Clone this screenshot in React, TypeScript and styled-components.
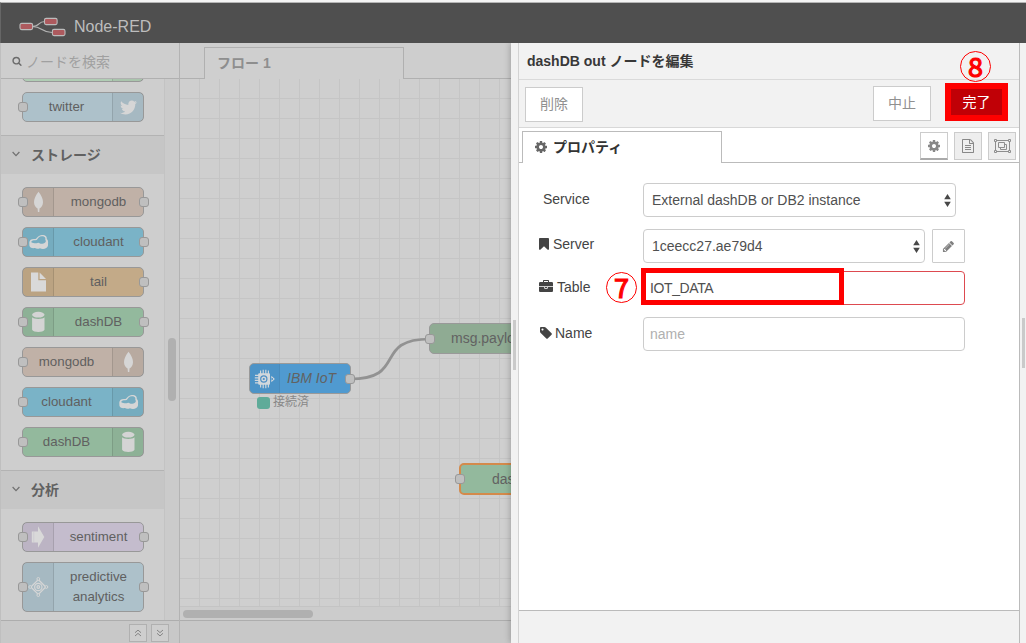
import React from "react";
import styled, { createGlobalStyle } from "styled-components";
import { FaTwitter } from "react-icons/fa";

const GlobalStyle = createGlobalStyle`
  * { box-sizing: border-box; }
  body {
    margin: 0;
    overflow: hidden;
    background: #cfcfcf;
    font-family: "Liberation Sans", "Noto Sans CJK JP", sans-serif;
    font-size: 14px;
    color: #444;
  }
`;

/* ---------- icons ---------- */

const GLYPHS = {
  cog: {
    w: 1792,
    d: "M1152 896q0-106-75-181t-181-75-181 75-75 181 75 181 181 75 181-75 75-181zm512-109v222q0 12-8 23t-20 13l-185 28q-19 54-39 91 35 50 107 138 10 12 10 25t-9 23q-27 37-99 108t-94 71q-12 0-26-9l-138-108q-44 23-91 38-16 136-29 186-7 28-36 28h-222q-14 0-24.5-8.5t-11.5-21.5l-28-184q-49-16-90-37l-141 107q-10 9-25 9-14 0-25-11-126-114-165-168-7-10-7-23 0-12 8-23 15-21 51-66.5t54-70.5q-27-50-41-99l-183-27q-13-2-21-12.5t-8-23.5v-222q0-12 8-23t19-13l186-28q14-46 39-92-40-57-107-138-10-12-10-24 0-10 9-23 26-36 98.5-107.5t94.5-71.5q13 0 26 10l138 107q44-23 91-38 16-136 29-186 7-28 36-28h222q14 0 24.5 8.5t11.5 21.5l28 184q49 16 90 37l142-107q9-9 24-9 13 0 25 10 129 119 165 170 7 8 7 22 0 12-8 23-15 21-51 66.5t-54 70.5q26 50 41 98l183 28q13 2 21 12.5t8 23.5z",
  },
  file: {
    w: 1536,
    d: "M1468 380q28 28 48 76t20 88v1152q0 40-28 68t-68 28h-1344q-40 0-68-28t-28-68v-1600q0-40 28-68t68-28h896q40 0 88 20t76 48zm-444-244v376h376q-10-29-22-41l-313-313q-12-12-41-22zm384 1528v-1024h-416q-40 0-68-28t-28-68v-416h-768v1536h1280zm-1024-864q0-14 9-23t23-9h704q14 0 23 9t9 23v64q0 14-9 23t-23 9h-704q-14 0-23-9t-9-23v-64zm736 224q14 0 23 9t9 23v64q0 14-9 23t-23 9h-704q-14 0-23-9t-9-23v-64q0-14 9-23t23-9h704zm0 256q14 0 23 9t9 23v64q0 14-9 23t-23 9h-704q-14 0-23-9t-9-23v-64q0-14 9-23t23-9h704z",
  },
  briefcase: {
    w: 1792,
    d: "M640 256h512v-128h-512v128zm1152 640v480q0 66-47 113t-113 47h-1472q-66 0-113-47t-47-113v-480h672v160q0 26 19 45t45 19h320q26 0 45-19t19-45v-160h672zm-768 0v128h-256v-128h256zm768-480v384h-1792v-384q0-66 47-113t113-47h352v-160q0-40 28-68t68-28h576q40 0 68 28t28 68v160h352q66 0 113 47t47 113z",
  },
  tag: {
    w: 1664,
    d: "M576 448q0-53-37.5-90.5t-90.5-37.5-90.5 37.5-37.5 90.5 37.5 90.5 90.5 37.5 90.5-37.5 37.5-90.5zm1067 576q0 53-37 90l-491 492q-39 37-91 37-53 0-90-37l-715-716q-38-37-64.5-101t-26.5-117v-416q0-52 38-90t90-38h416q53 0 117 26.5t102 64.5l715 714q37 39 37 91z",
  },
  bookmark: {
    w: 1280,
    d: "M1164 128q23 0 44 9 33 13 52.5 41t19.5 62v1289q0 34-19.5 62t-52.5 41q-19 8-44 8-48 0-83-32l-441-424-441 424q-36 33-83 33-23 0-44-9-33-13-52.5-41t-19.5-62v-1289q0-34 19.5-62t52.5-41q21-9 44-9h1048z",
  },
  pencil: {
    w: 1792,
    d: "M491 1536l91-91-235-235-91 91v107h128v128h107zm523-928q0-22-22-22-10 0-17 7l-542 542q-7 7-7 17 0 22 22 22 10 0 17-7l542-542q7-7 7-17zm-54-192l416 416-832 832h-416v-416zm683 96q0 53-37 90l-166 166-416-416 166-165q36-38 90-38 53 0 91 38l235 234q37 39 37 91z",
  },
  search: {
    w: 1792,
    d: "M1216 832q0-185-131.5-316.5t-316.5-131.5-316.5 131.5-131.5 316.5 131.5 316.5 316.5 131.5 316.5-131.5 131.5-316.5zm512 832q0 52-38 90t-90 38q-54 0-90-38l-343-342q-179 124-399 124-143 0-273.5-55.5t-225-150-150-225-55.5-273.5 55.5-273.5 150-225 225-150 273.5-55.5 273.5 55.5 225 150 150 225 55.5 273.5q0 220-124 399l343 343q37 37 37 90z",
  },
};

const Glyph = ({ name, size = 14 }: { name: keyof typeof GLYPHS; size?: number }) => (
  <svg
    width={(GLYPHS[name].w / 1792) * size}
    height={size}
    viewBox={`0 0 ${GLYPHS[name].w} 1792`}
    fill="currentColor"
  >
    <path d={GLYPHS[name].d} />
  </svg>
);

const LogoMark = () => (
  <svg width="48" height="20" viewBox="0 0 48 20">
    <g fill="none" stroke="#b4b4b4" strokeWidth="1.2">
      <path d="M13 9.5C22 9.5 18 4.5 26 4.5" />
      <path d="M13 9.5C24 9.5 22 15.5 33 15.5" />
    </g>
    <g fill="#ad5a5e" stroke="#bcbcbc" strokeWidth="1.1">
      <rect x="1" y="6.4" width="12.6" height="6.2" rx="1.6" />
      <rect x="25.5" y="1.4" width="12.6" height="6.2" rx="1.6" />
      <rect x="33.4" y="12.4" width="12.6" height="6.2" rx="1.6" />
    </g>
  </svg>
);

const Leaf = () => (
  <svg width="22" height="22" viewBox="0 0 22 22" fill="#d6d6d6">
    <path d="M11.500 .8C8.500 4.800 7 8 7 11.200c0 3 1.600 5 3.600 6.400L10.900 21h1.400l.2-3.400c2-1.400 3.500-3.400 3.500-6.400C16 8 14.500 4.800 11.500 .8z" />
  </svg>
);

const Cloud = () => (
  <svg width="22" height="20" viewBox="0 0 22 20">
    <path
      d="M2.300 10.500C2.500 7.500 5 6.500 8.500 7C10 6.500 11 3.200 15 3C19 3 20 5 19.800 7C21.300 8 21.200 10 21 12V13.500C20.500 16.500 16 18 13 16.200C11 17 9 16.800 8 16C5 16.500 2.500 15.500 2.400 13.500z"
      fill="#d6d6d6"
    />
    <path
      d="M4.200 9.800C5.200 8.100 8 8.400 9.800 8.100C11 6.500 12 4.200 15 4.300C18 4.300 18.700 6 18.300 7.800C19.800 9.500 18 11.600 15.500 11.800C13.500 12 12.500 10.900 11.300 10.700C9.500 11.300 8.800 11.400 7.500 11.200C6 11.100 4.500 10.800 4.200 9.800z"
      fill="#76acc0"
    />
  </svg>
);

const FileSolid = () => (
  <svg width="22" height="22" viewBox="0 0 22 22" fill="#d9d9d9">
    <path d="M4 1.500h7.300v7.700H19V20.500H4z" />
    <path d="M12.600 1.500L19 7.900h-6.400z" />
  </svg>
);

const Cylinder = () => (
  <svg width="22" height="24" viewBox="0 0 22 24" fill="#d4d4d4">
    <ellipse cx="11.300" cy="4.700" rx="6.200" ry="2.900" />
    <path d="M5.100 7.300c1.500 2.100 10.900 2.100 12.400 0v12.400c-1.500 3-10.900 3-12.400 0z" />
  </svg>
);

const Arrow = () => (
  <svg width="22" height="24" viewBox="0 0 22 24" fill="#d9d9d9">
    <path d="M4.800 6.500H11V1.200L17.300 12l-6.300 10.800v-5.300H4.800z" />
    <path d="M6.800 6.500v11" stroke="#c9c4ce" strokeWidth=".7" />
  </svg>
);

const Predict = () => (
  <svg width="22" height="22" viewBox="0 0 22 22" fill="none" stroke="#d6d6d6" strokeWidth="1.200">
    <path d="M11.300 3.500L18.800 11l-7.500 7.500L3.800 11z" />
    <circle cx="11.300" cy="11" r="3.700" />
    <circle cx="11.300" cy="11" r="1.300" />
    <g fill="#a6bac2" strokeWidth="1">
      <circle cx="11.300" cy="2.900" r="1.400" />
      <circle cx="19.400" cy="11" r="1.400" />
      <circle cx="11.300" cy="19.100" r="1.400" />
      <circle cx="3.200" cy="11" r="1.400" />
    </g>
  </svg>
);

const Chip = () => (
  <svg width="22" height="20" viewBox="0 0 22 20">
    <g stroke="#cfd6db" strokeWidth="1.200">
      <path d="M6.600 1.500v17M9.200 .8v18.400M11.800 .8v18.400M14.400 1.500v17M1 6.300h14M.8 8.800h14M.8 11.300h14M1 13.800h14" />
    </g>
    <rect x="4.200" y="4.200" width="11.800" height="11.600" rx="1" fill="#d3d8dc" />
    <circle cx="9.800" cy="10" r="3.100" fill="none" stroke="#4e8fc4" strokeWidth="1.200" />
    <circle cx="9.800" cy="10" r="1.100" fill="#4e8fc4" />
    <path d="M17.300 6.700l3.600 3.300-3.600 3.300z" fill="#d3d8dc" />
    <circle cx="18.200" cy="10" r=".9" fill="#4e8fc4" />
  </svg>
);

const GroupIcon = () => (
  <svg width="17" height="14" viewBox="0 0 17 14" fill="none" stroke="#8e8e8e">
    <path d="M1.500 1.500h14v11h-14z" />
    <path d="M.5 .5h2v2h-2zM14.500 .5h2v2h-2zM.5 11.500h2v2h-2zM14.500 11.500h2v2h-2z" fill="#eee" />
    <path d="M4.500 3.500h6v5h-6zM10.500 5.500h2v5h-6v-2" />
  </svg>
);

const Chevron = () => (
  <svg width="8" height="6" viewBox="0 0 8 6" fill="none" stroke="#707070" strokeWidth="1.200">
    <path d="M.6 1L4 4.600 7.400 1" />
  </svg>
);

const DoubleChevron = ({ down = false }: { down?: boolean }) => (
  <svg width="8" height="8" viewBox="0 0 8 8" fill="none" stroke="#858585" strokeWidth="1">
    <path d={down ? "M1 1l3 2.600L7 1M1 4.300l3 2.600 3-2.600" : "M1 3.700l3-2.600 3 2.600M1 7l3-2.600L7 7"} />
  </svg>
);

const Updown = () => (
  <svg width="7" height="13" viewBox="0 0 7 13" fill="#484848">
    <path d="M3.500 0L6.800 5.300H.2zM3.500 13L.2 7.700h6.600z" />
  </svg>
);

/* ---------- frame ---------- */

const Page = styled.div`
  display: flex;
  flex-direction: column;
  width: 1026px;
  height: 643px;
  border-top: 2px solid #f4f4f4;
`;

const Header = styled.header`
  flex: 0 0 41px;
  display: flex;
  align-items: center;
  gap: 7px;
  padding: 7px 0 0 18px;
  background: #4f4f4f;
  border-top: 1px solid #b5b5b5;
  border-left: 1px solid #666;
  color: #bdbdbd;
  font-size: 16px;
`;

const Body = styled.main`
  flex: 1;
  display: flex;
  min-height: 0;
`;

/* ---------- palette ---------- */

const Palette = styled.aside`
  flex: 0 0 180px;
  display: flex;
  flex-direction: column;
  border-left: 1px solid #bfbfbf;
  border-right: 1px solid #b3b3b3;
  background: #cecece;
`;

const Search = styled.div`
  flex: 0 0 36px;
  display: flex;
  align-items: center;
  gap: 4px;
  padding: 1px 0 0 11px;
  border-bottom: 1px solid #b0b0b0;
  color: #a0a0a0;
  svg { color: #6c6c6c; }
`;

const PaletteScroll = styled.div`
  flex: 1;
  display: flex;
  min-height: 0;
  overflow: hidden;
`;

const PaletteList = styled.div`
  flex: 0 0 164px;
  border-right: 1px solid #c3c3c3;
`;

const ScrollLane = styled.div`
  flex: 1;
  padding: 259px 0 0 3px;
  background: #cbcbcb;
`;

const ScrollThumb = styled.div`
  width: 8px;
  height: 63px;
  border-radius: 4px;
  background: #b0b0b0;
`;

const NodeGroup = styled.div<{ $clipped?: boolean }>`
  display: flex;
  flex-direction: column;
  gap: 10px;
  padding: 13px 20px 13px 21px;
  margin-top: ${(p) => (p.$clipped ? "-40px" : "0")};
`;

const CategoryHeader = styled.div`
  height: 39px;
  display: flex;
  align-items: center;
  gap: 11px;
  padding: 0 0 2px 11px;
  border-top: 1px solid #b3b3b3;
  background: #c6c6c6;
  color: #616161;
  font-weight: bold;
`;

const NodeBox = styled.div<{ $color: string; $tall?: boolean; $flip?: boolean }>`
  position: relative;
  flex: none;
  display: flex;
  flex-direction: ${(p) => (p.$flip ? "row-reverse" : "row")};
  height: ${(p) => (p.$tall ? 50 : 30)}px;
  width: 122px;
  border: 1px solid #989898;
  border-radius: 5px;
  background: ${(p) => p.$color};
`;

const NodeIcon = styled.div<{ $flip?: boolean }>`
  flex: 0 0 31px;
  display: flex;
  align-items: center;
  justify-content: center;
  background: rgba(0, 0, 0, 0.04);
  border: 0 solid rgba(0, 0, 0, 0.11);
  border-width: ${(p) => (p.$flip ? "0 0 0 1px" : "0 1px 0 0")};
`;

const NodeLabel = styled.div<{ $flip?: boolean }>`
  flex: 1;
  display: flex;
  align-items: center;
  justify-content: center;
  padding-right: ${(p) => (p.$flip ? 2 : 0)}px;
  text-align: center;
  white-space: pre-line;
  font-size: 13.3px;
  line-height: 20px;
  color: #606060;
`;

const Port = styled.i<{ $side: "left" | "right"; $out?: number }>`
  position: absolute;
  ${(p) => p.$side}: -${(p) => p.$out ?? 5}px;
  top: calc(50% - 5px);
  width: 10px;
  height: 10px;
  border: 1px solid #989898;
  border-radius: 3px;
  background: #bfbfbf;
`;

const PaletteFooter = styled.div`
  flex: 0 0 23px;
  display: flex;
  justify-content: flex-end;
  gap: 4px;
  padding: 3px 10px 0 0;
  border-top: 1px solid #adadad;
  background: #c8c8c8;
`;

const MiniButton = styled.span`
  width: 18px;
  height: 18px;
  display: flex;
  align-items: center;
  justify-content: center;
  border: 1px solid #b0b0b0;
  background: #cecece;
`;

/* ---------- workspace ---------- */

const Workspace = styled.section`
  flex: 0 0 331px;
  display: flex;
  flex-direction: column;
  min-width: 0;
`;

const FlowTabs = styled.div`
  flex: 0 0 36px;
  display: flex;
  padding: 4px 0 0 24px;
  background: linear-gradient(#b0b0b0, #b0b0b0) bottom / 100% 1px no-repeat #cecece;
`;

const FlowTab = styled.div`
  width: 200px;
  padding: 5px 0 0 12px;
  border: 1px solid #b0b0b0;
  border-bottom: 0;
  background: #cfcfcf;
  color: #8e8e8e;
  font-weight: bold;
  line-height: 20px;
`;

const Canvas = styled.div`
  flex: 0 0 528px;
  position: relative;
  overflow: hidden;
  border-bottom: 1px solid #c4c4c4;
  background-color: #cfcfcf;
  background-image: linear-gradient(90deg, transparent 19px, #c5c5c5 19px),
    linear-gradient(transparent 19px, #c5c5c5 19px);
  background-size: 20px 20px;
`;

const Wires = styled.svg`
  position: absolute;
  inset: 0;
`;

const CanvasNode = styled.div<{ $x: number; $y: number; $w: number; $color: string; $selected?: boolean }>`
  position: absolute;
  left: ${(p) => p.$x}px;
  top: ${(p) => p.$y}px;
  width: ${(p) => p.$w}px;
  height: ${(p) => (p.$selected ? 32 : 31)}px;
  display: flex;
  align-items: center;
  border: ${(p) => (p.$selected ? "2px solid #d48a4b" : "1px solid #999")};
  border-radius: 5px;
  background: ${(p) => p.$color};
  color: #626262;
`;

const CanvasIcon = styled.div`
  align-self: stretch;
  width: 30px;
  display: flex;
  align-items: center;
  justify-content: center;
  border-right: 1px solid rgba(0, 0, 0, 0.06);
  background: rgba(0, 0, 0, 0.04);
  border-radius: 4px 0 0 4px;
`;

const CanvasLabel = styled.span<{ $indent: number; $italic?: boolean }>`
  padding-left: ${(p) => p.$indent}px;
  padding-bottom: 1px;
  white-space: nowrap;
  font-style: ${(p) => (p.$italic ? "italic" : "normal")};
`;

const Status = styled.div`
  position: absolute;
  left: 77px;
  top: 314px;
  display: flex;
  align-items: center;
  gap: 3px;
  height: 20px;
  font-size: 12px;
  line-height: 16px;
  color: #888;
`;

const StatusText = styled.span`
  padding-bottom: 3px;
`;

const StatusDot = styled.i`
  width: 13px;
  height: 12px;
  border-radius: 3px;
  background: #5fab99;
`;

const HScroll = styled.div`
  flex: 0 0 13px;
  padding: 3px 0 0 3px;
  background: #cccccc;
`;

const HThumb = styled.div`
  width: 130px;
  height: 8px;
  border-radius: 4px;
  background: #b0b0b0;
`;

const WorkspaceFooter = styled.div`
  flex: 1;
  border-top: 1px solid #adadad;
  background: #c8c8c8;
`;

/* ---------- edit tray ---------- */

const Tray = styled.section`
  position: relative;
  flex: 0 0 509px;
  display: flex;
  border-right: 1px solid #bbb;
  background: #f2f2f2;
  box-shadow: -1px 0 6px rgba(0, 0, 0, 0.22);
  clip-path: inset(0 0 0 -12px);
`;

const Grip = styled.div`
  flex: 0 0 8px;
  padding: 277px 0 0 2px;
  border-right: 1px solid #d3d3d3;
`;

const GripHandle = styled.div`
  width: 3px;
  height: 50px;
  background: #cacaca;
`;

const TrayMain = styled.div`
  flex: 1;
  display: flex;
  flex-direction: column;
`;

const TrayTitle = styled.h1`
  flex: 0 0 37px;
  margin: 0;
  padding-left: 8px;
  border-bottom: 1px solid #dadada;
  font-size: 14px;
  line-height: 36px;
  color: #383838;
`;

const Toolbar = styled.div`
  flex: 0 0 48px;
  display: flex;
  align-items: flex-start;
  padding: 6px 11px 0 6px;
  border-bottom: 1px solid #d8d8d8;
`;

const Button = styled.button<{ $drop?: number }>`
  width: 58px;
  height: 35px;
  margin-top: ${(p) => p.$drop || 0}px;
  padding: 0 0 3px;
  border: 1px solid #ccc;
  background: #fff;
  color: #909090;
  font: inherit;
`;

const Spacer = styled.div`
  flex: 1;
`;

const DoneFrame = styled.div`
  position: relative;
  width: 63px;
  height: 38px;
  margin: -3px 0 0 14px;
  border: 6px solid #fe0000;
  background: #c00006;
  color: #fff;
  line-height: 26px;
  text-align: center;
`;

const Step = styled.span<{ $x: number; $y: number }>`
  position: absolute;
  left: ${(p) => p.$x}px;
  top: ${(p) => p.$y}px;
  width: 31px;
  height: 31px;
  border: 1.5px solid #fe0000;
  border-radius: 50%;
  font: 27px/28px "Noto Sans CJK JP", sans-serif;
  -webkit-text-stroke: 1.2px #fe0000;
  text-align: center;
  color: #fe0000;
`;

const TabBar = styled.div`
  flex: 0 0 35px;
  display: flex;
  padding: 3px 3px 0;
  background: linear-gradient(#bbb, #bbb) bottom / 100% 1px no-repeat #fff;
`;

const PropertyTab = styled.div`
  width: 200px;
  display: flex;
  align-items: center;
  gap: 5px;
  padding: 0 0 4px 11px;
  border: 1px solid #bbb;
  border-bottom: 0;
  background: #fff;
  color: #333;
  font-weight: bold;
  svg { color: #666; margin-top: 3px; }
`;

const TabIcons = styled.div`
  display: flex;
  gap: 6px;
  padding-top: 1px;
`;

const TabIcon = styled.span<{ $active?: boolean }>`
  width: 28px;
  height: 28px;
  display: flex;
  align-items: center;
  justify-content: center;
  border: 1px solid #ccc;
  border-bottom: ${(p) => (p.$active ? "2px solid #aaa" : "1px solid #ccc")};
  background: ${(p) => (p.$active ? "#fff" : "#eee")};
  color: #888;
`;

const Form = styled.div`
  flex: 1;
  display: flex;
  flex-direction: column;
  padding: 20px 0 0 20px;
  background: #fff;
`;

const Row = styled.div<{ $gap?: number }>`
  position: relative;
  display: flex;
  height: 34px;
  margin-bottom: ${(p) => p.$gap ?? 12}px;
`;

const Label = styled.label<{ $indent?: number; $gap?: number; $height?: number }>`
  flex: 0 0 104px;
  height: ${(p) => p.$height ?? 32}px;
  display: flex;
  align-items: center;
  gap: ${(p) => p.$gap ?? 4}px;
  padding-left: ${(p) => p.$indent || 0}px;
  color: #444;
`;

const Field = styled.div<{ $w: number; $error?: boolean; $muted?: boolean; $pad?: number }>`
  width: ${(p) => p.$w}px;
  display: flex;
  align-items: center;
  justify-content: space-between;
  padding: 0 4px 0 ${(p) => p.$pad ?? 6}px;
  border: 1px solid ${(p) => (p.$error ? "#dd4a50" : "#ccc")};
  border-radius: 4px;
  color: ${(p) => (p.$muted ? "#b0b0b0" : "#505050")};
  letter-spacing: ${(p) => (p.$error ? "-0.4px" : "normal")};
`;

const EditButton = styled.span`
  width: 33px;
  margin-left: 7px;
  display: flex;
  align-items: center;
  justify-content: center;
  border: 1px solid #ccc;
  border-radius: 1px;
  color: #808080;
`;

const Highlight = styled.div`
  position: absolute;
  left: 102px;
  top: -3px;
  width: 203px;
  height: 37px;
  border: 5px solid #fe0000;
`;

const TrayFooter = styled.div`
  flex: 0 0 33px;
  border-top: 1px solid #bbb;
`;

const SideStrip = styled.div`
  flex: 1;
  padding: 275px 0 0 2px;
  background: #f2f2f2;
`;

/* ---------- data ---------- */

interface PaletteNode {
  label: string;
  color: string;
  icon: React.ReactNode;
  flip?: boolean;
  input?: boolean;
  output?: boolean;
  tall?: boolean;
}

const BROWN = "#c0b1a7";
const CYAN = "#7ab3c7";
const GREEN = "#93b99d";

const social: PaletteNode[] = [
  { label: "", color: "#b0cdb4", icon: null, flip: true },
  { label: "twitter", color: "#adc1ca", icon: <FaTwitter size={17} color="#d6d6d6" />, flip: true, input: true },
];

const storage: PaletteNode[] = [
  { label: "mongodb", color: BROWN, icon: <Leaf />, input: true, output: true },
  { label: "cloudant", color: CYAN, icon: <Cloud />, input: true, output: true },
  { label: "tail", color: "#c3aa88", icon: <FileSolid />, output: true },
  { label: "dashDB", color: GREEN, icon: <Cylinder />, input: true, output: true },
  { label: "mongodb", color: BROWN, icon: <Leaf />, flip: true, input: true },
  { label: "cloudant", color: CYAN, icon: <Cloud />, flip: true, input: true },
  { label: "dashDB", color: GREEN, icon: <Cylinder />, flip: true, input: true },
];

const analysis: PaletteNode[] = [
  { label: "sentiment", color: "#c4bccd", icon: <Arrow />, input: true, output: true },
  { label: "predictive\nanalytics", color: "#adc1ca", icon: <Predict />, input: true, output: true, tall: true },
];

const Nodes = ({ items, clipped }: { items: PaletteNode[]; clipped?: boolean }) => (
  <NodeGroup $clipped={clipped}>
    {items.map((n, i) => (
      <NodeBox key={i} $color={n.color} $tall={n.tall} $flip={n.flip}>
        <NodeIcon $flip={n.flip}>{n.icon}</NodeIcon>
        <NodeLabel $flip={n.flip}>{n.label}</NodeLabel>
        {n.input && <Port $side="left" />}
        {n.output && <Port $side="right" $out={6} />}
      </NodeBox>
    ))}
  </NodeGroup>
);

export default function App() {
  return (
    <>
      <GlobalStyle />
      <Page>
        <Header>
          <LogoMark />
          <span>Node-RED</span>
        </Header>
        <Body>
          <Palette>
            <Search>
              <Glyph name="search" size={10} />
              <span>ノードを検索</span>
            </Search>
            <PaletteScroll>
              <PaletteList>
                <Nodes items={social} clipped />
                <CategoryHeader>
                  <Chevron />
                  ストレージ
                </CategoryHeader>
                <Nodes items={storage} />
                <CategoryHeader>
                  <Chevron />
                  分析
                </CategoryHeader>
                <Nodes items={analysis} />
              </PaletteList>
              <ScrollLane>
                <ScrollThumb />
              </ScrollLane>
            </PaletteScroll>
            <PaletteFooter>
              <MiniButton>
                <DoubleChevron />
              </MiniButton>
              <MiniButton>
                <DoubleChevron down />
              </MiniButton>
            </PaletteFooter>
          </Palette>

          <Workspace>
            <FlowTabs>
              <FlowTab>フロー 1</FlowTab>
            </FlowTabs>
            <Canvas>
              <Wires width="331" height="527">
                <path d="M170 300C228 300 192 260 250 260" fill="none" stroke="#929292" strokeWidth="2.700" />
              </Wires>
              <CanvasNode $x={69} $y={284} $w={102} $color="#509ad0">
                <CanvasIcon>
                  <Chip />
                </CanvasIcon>
                <CanvasLabel $indent={7} $italic>
                  IBM IoT
                </CanvasLabel>
                <Port $side="right" />
              </CanvasNode>
              <Status>
                <StatusDot />
                <StatusText>接続済</StatusText>
              </Status>
              <CanvasNode $x={249} $y={244} $w={150} $color="#8fab93">
                <CanvasLabel $indent={21}>msg.payload</CanvasLabel>
                <Port $side="left" />
              </CanvasNode>
              <CanvasNode $x={279} $y={384} $w={120} $color={GREEN} $selected>
                <CanvasLabel $indent={31}>dashDB</CanvasLabel>
                <Port $side="left" $out={6} />
              </CanvasNode>
            </Canvas>
            <HScroll>
              <HThumb />
            </HScroll>
            <WorkspaceFooter />
          </Workspace>

          <Tray>
            <Grip>
              <GripHandle />
            </Grip>
            <TrayMain>
              <TrayTitle>dashDB out ノードを編集</TrayTitle>
              <Toolbar>
                <Button $drop={1}>削除</Button>
                <Spacer />
                <Button>中止</Button>
                <DoneFrame>
                  完了
                  <Step $x={9} $y={-38}>8</Step>
                </DoneFrame>
              </Toolbar>
              <TabBar>
                <PropertyTab>
                  <Glyph name="cog" />
                  プロパティ
                </PropertyTab>
                <Spacer />
                <TabIcons>
                  <TabIcon $active>
                    <Glyph name="cog" />
                  </TabIcon>
                  <TabIcon>
                    <Glyph name="file" />
                  </TabIcon>
                  <TabIcon>
                    <GroupIcon />
                  </TabIcon>
                </TabIcons>
              </TabBar>
              <Form>
                <Row>
                  <Label $indent={4}>Service</Label>
                  <Field $w={313} $pad={8}>
                    External dashDB or DB2 instance
                    <Updown />
                  </Field>
                </Row>
                <Row $gap={8}>
                  <Label $height={30}>
                    <Glyph name="bookmark" />
                    Server
                  </Label>
                  <Field $w={282} $pad={8}>
                    1ceecc27.ae79d4
                    <Updown />
                  </Field>
                  <EditButton>
                    <Glyph name="pencil" size={13} />
                  </EditButton>
                </Row>
                <Row>
                  <Label>
                    <Glyph name="briefcase" />
                    Table
                  </Label>
                  <Field $w={322} $error>
                    IOT_DATA
                  </Field>
                  <Highlight />
                  <Step $x={67} $y={1}>7</Step>
                </Row>
                <Row>
                  <Label $gap={3}>
                    <Glyph name="tag" />
                    Name
                  </Label>
                  <Field $w={322} $muted>
                    name
                  </Field>
                </Row>
              </Form>
              <TrayFooter />
            </TrayMain>
          </Tray>
          <SideStrip>
            <GripHandle />
          </SideStrip>
        </Body>
      </Page>
    </>
  );
}
